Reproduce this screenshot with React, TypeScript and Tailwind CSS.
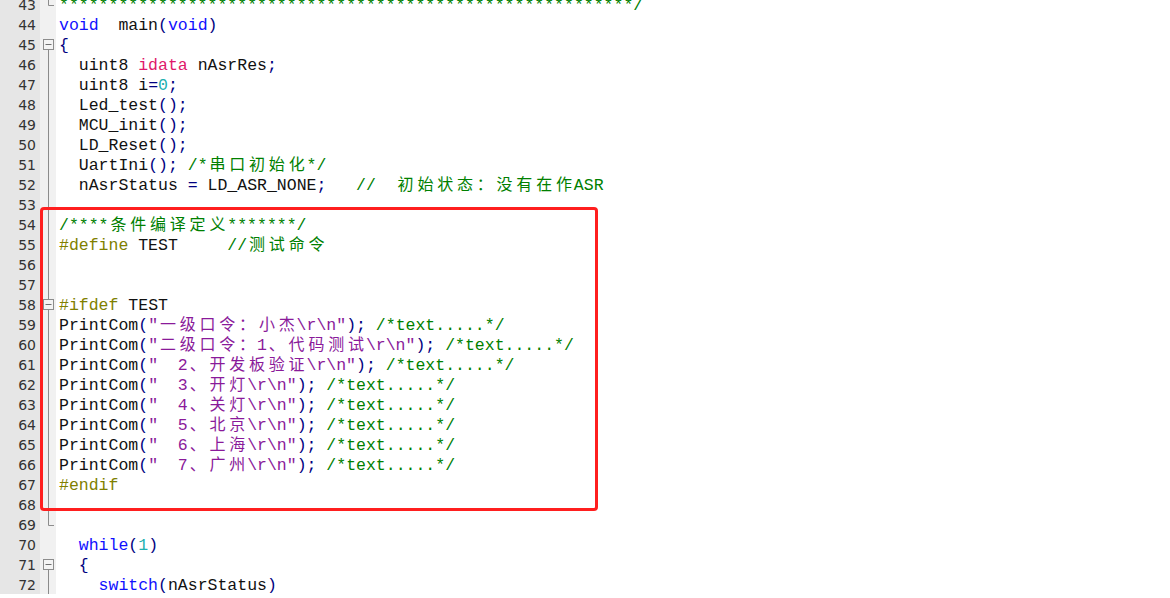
import React from "react";

type Seg = [string, string];

const K = "text-[#1010ff]";
const D = "text-[#111111]";
const P = "text-[#000080]";
const C = "text-[#008000]";
const PP = "text-[#808000]";
const S = "text-[#8a1a9a]";
const N = "text-[#20b0b0]";
const R = "text-[#e0186a]";

const print = (body: string): Seg[] => [
  ["PrintCom", D],
  ["(", P],
  ['"' + body + '\\r\\n"', S],
  [");", P],
  [" /*text.....*/", C],
];

const lines: { n: number; fold: string; segs: Seg[] }[] = [
  { n: 43, fold: "end", segs: [["*".repeat(58) + "/", C]] },
  { n: 44, fold: "none", segs: [["void", K], ["  main", D], ["(", P], ["void", K], [")", P]] },
  { n: 45, fold: "box", segs: [["{", P]] },
  { n: 46, fold: "line", segs: [["  uint8 ", D], ["idata", R], [" nAsrRes", D], [";", P]] },
  { n: 47, fold: "line", segs: [["  uint8 i", D], ["=", P], ["0", N], [";", P]] },
  { n: 48, fold: "line", segs: [["  Led_test", D], ["();", P]] },
  { n: 49, fold: "line", segs: [["  MCU_init", D], ["();", P]] },
  { n: 50, fold: "line", segs: [["  LD_Reset", D], ["();", P]] },
  { n: 51, fold: "line", segs: [["  UartIni", D], ["();", P], [" /*串口初始化*/", C]] },
  { n: 52, fold: "line", segs: [["  nAsrStatus ", D], ["=", P], [" LD_ASR_NONE", D], [";", P], ["   //  初始状态：没有在作ASR", C]] },
  { n: 53, fold: "line", segs: [] },
  { n: 54, fold: "line", segs: [["/****条件编译定义*******/", C]] },
  { n: 55, fold: "line", segs: [["#define", PP], [" TEST", D], ["     //测试命令", C]] },
  { n: 56, fold: "line", segs: [] },
  { n: 57, fold: "line", segs: [] },
  { n: 58, fold: "boxmid", segs: [["#ifdef", PP], [" TEST", D]] },
  { n: 59, fold: "line", segs: print("一级口令：小杰") },
  { n: 60, fold: "line", segs: print("二级口令：1、代码测试") },
  { n: 61, fold: "line", segs: print("  2、开发板验证") },
  { n: 62, fold: "line", segs: print("  3、开灯") },
  { n: 63, fold: "line", segs: print("  4、关灯") },
  { n: 64, fold: "line", segs: print("  5、北京") },
  { n: 65, fold: "line", segs: print("  6、上海") },
  { n: 66, fold: "line", segs: print("  7、广州") },
  { n: 67, fold: "line", segs: [["#endif", PP]] },
  { n: 68, fold: "line", segs: [] },
  { n: 69, fold: "end", segs: [] },
  { n: 70, fold: "none", segs: [["  while", K], ["(", P], ["1", N], [")", P]] },
  { n: 71, fold: "box", segs: [["  {", P]] },
  { n: 72, fold: "line", segs: [["    switch", K], ["(", P], ["nAsrStatus", D], [")", P]] },
];

const cjk = /([\u3000-\u303f\u4e00-\u9fff\uff00-\uffef]+)/;

// CJK glyphs take two monospace columns, each one centred in its cell
function Text({ text, color }: { text: string; color: string }) {
  const parts = text.split(cjk);
  return (
    <span className={color}>
      {parts.map((p, i) =>
        i % 2 === 1 ? (
          Array.from(p).map((ch, j) => (
            <span
              key={i + "-" + j}
              className="inline-block w-[19.8px] text-center font-['Noto_Sans_CJK_SC',sans-serif] text-[16px] leading-[14px]"
            >
              {ch}
            </span>
          ))
        ) : (
          <span key={i}>{p}</span>
        )
      )}
    </span>
  );
}

function Fold({ kind }: { kind: string }) {
  return (
    <svg width="16" height="20" viewBox="0 0 16 20" className="block">
      {kind === "end" && <path d="M8.5 0V11.5H14" stroke="#8c8c8c" strokeWidth="1" fill="none" />}
      {kind === "line" && <path d="M8.5 0V20" stroke="#8c8c8c" strokeWidth="1" />}
      {(kind === "box" || kind === "boxmid") && (
        <>
          {kind === "boxmid" && <path d="M8.5 0V5" stroke="#8c8c8c" strokeWidth="1" />}
          <path d="M8.5 15V20" stroke="#8c8c8c" strokeWidth="1" />
          <rect x="3.5" y="5.5" width="10" height="10" fill="#f4f4f4" stroke="#8c8c8c" strokeWidth="1" />
          <path d="M5.5 10.5H11.5" stroke="#707070" strokeWidth="1" />
        </>
      )}
    </svg>
  );
}

export default function App() {
  return (
    <div className="w-[1170px] h-[598px] overflow-hidden bg-white relative">
      <div className="flex flex-col -mt-[6px]">
        {lines.map((l) => (
          <div key={l.n} className="flex h-[20px]">
            <div className="w-[40px] shrink-0 bg-[#e6e6e6] pr-[4px] pt-[1px] text-right font-['DejaVu_Sans',sans-serif] text-[14px] leading-[20px] text-[#333333]">
              {l.n}
            </div>
            <div className="w-[16px] shrink-0 bg-[#f1f1f1]">
              <Fold kind={l.fold} />
            </div>
            <div className="h-[20px] pl-[3px] pt-[2px] whitespace-pre font-['Liberation_Mono',monospace] text-[16.5px] leading-[20px]">
              {l.segs.map((s, i) => (
                <Text key={i} text={s[0]} color={s[1]} />
              ))}
            </div>
          </div>
        ))}
      </div>
      <div className="absolute left-[40px] top-[207px] w-[558px] h-[304px] border-[3px] border-[#ff1f1f] rounded-[4px]" />
    </div>
  );
}
